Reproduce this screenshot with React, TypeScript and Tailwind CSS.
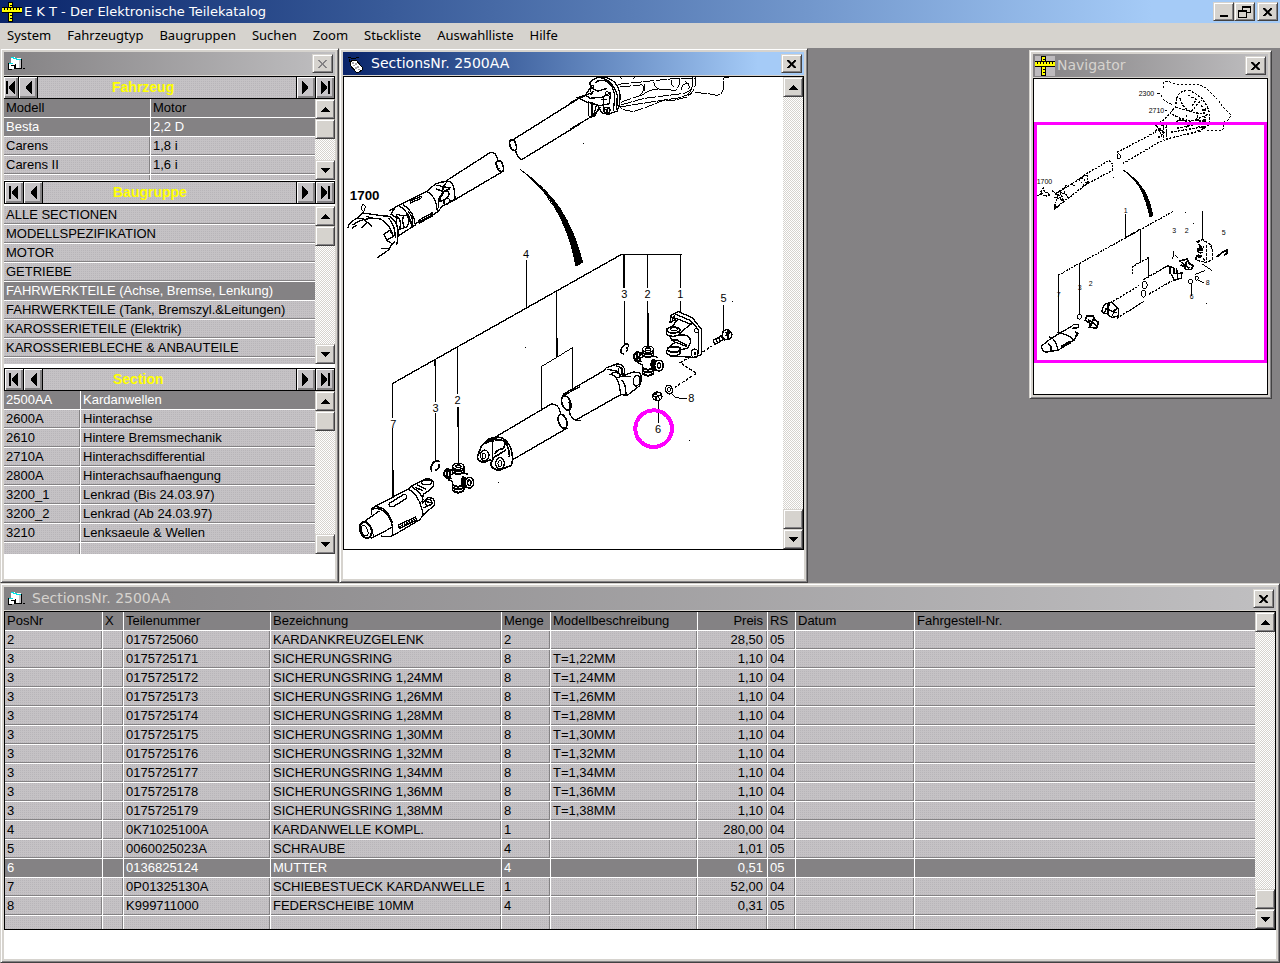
import { useState } from "react";
import clsx from "clsx";

const menu = ["System", "Fahrzeugtyp", "Baugruppen", "Suchen", "Zoom", "Stьckliste", "Auswahlliste", "Hilfe"];

const vehicles = [
    ["Besta", "2,2 D"],
    ["Carens", "1,8 i"],
    ["Carens II", "1,6 i"],
];

const groups = [
    ["ALLE SECTIONEN"],
    ["MODELLSPEZIFIKATION"],
    ["MOTOR"],
    ["GETRIEBE"],
    ["FAHRWERKTEILE (Achse, Bremse, Lenkung)"],
    ["FAHRWERKTEILE (Tank, Bremszyl.&Leitungen)"],
    ["KAROSSERIETEILE (Elektrik)"],
    ["KAROSSERIEBLECHE & ANBAUTEILE"],
];

const sections = [
    ["2500AA", "Kardanwellen"],
    ["2600A", "Hinterachse"],
    ["2610", "Hintere Bremsmechanik"],
    ["2710A", "Hinterachsdifferential"],
    ["2800A", "Hinterachsaufhaengung"],
    ["3200_1", "Lenkrad (Bis 24.03.97)"],
    ["3200_2", "Lenkrad (Ab 24.03.97)"],
    ["3210", "Lenksaeule & Wellen"],
];

const parts = [
    ["2", "", "0175725060", "KARDANKREUZGELENK", "2", "", "28,50", "05", "", ""],
    ["3", "", "0175725171", "SICHERUNGSRING", "8", "T=1,22MM", "1,10", "04", "", ""],
    ["3", "", "0175725172", "SICHERUNGSRING 1,24MM", "8", "T=1,24MM", "1,10", "04", "", ""],
    ["3", "", "0175725173", "SICHERUNGSRING 1,26MM", "8", "T=1,26MM", "1,10", "04", "", ""],
    ["3", "", "0175725174", "SICHERUNGSRING 1,28MM", "8", "T=1,28MM", "1,10", "04", "", ""],
    ["3", "", "0175725175", "SICHERUNGSRING 1,30MM", "8", "T=1,30MM", "1,10", "04", "", ""],
    ["3", "", "0175725176", "SICHERUNGSRING 1,32MM", "8", "T=1,32MM", "1,10", "04", "", ""],
    ["3", "", "0175725177", "SICHERUNGSRING 1,34MM", "8", "T=1,34MM", "1,10", "04", "", ""],
    ["3", "", "0175725178", "SICHERUNGSRING 1,36MM", "8", "T=1,36MM", "1,10", "04", "", ""],
    ["3", "", "0175725179", "SICHERUNGSRING 1,38MM", "8", "T=1,38MM", "1,10", "04", "", ""],
    ["4", "", "0K71025100A", "KARDANWELLE KOMPL.", "1", "", "280,00", "04", "", ""],
    ["5", "", "0060025023A", "SCHRAUBE", "4", "", "1,01", "05", "", ""],
    ["6", "", "0136825124", "MUTTER", "4", "", "0,51", "05", "", ""],
    ["7", "", "0P01325130A", "SCHIEBESTUECK KARDANWELLE", "1", "", "52,00", "04", "", ""],
    ["8", "", "K999711000", "FEDERSCHEIBE 10MM", "4", "", "0,31", "05", "", ""],
];

const raised =
    "bg-[#d6d3ce] border border-t-[#d6d3ce] border-l-[#d6d3ce] border-r-[#424142] border-b-[#424142] shadow-[inset_1px_1px_0_#fff,inset_-1px_-1px_0_#848284]";

// dithered grey of the 256 colour palette
const dither = "bg-[conic-gradient(#b8b5b9_25%,#c5c2c5_0)] bg-[length:2px_2px]";

function RulerIcon({ backed = false }: { backed?: boolean }) {
    return (
        <svg className="shrink-0" width="20" height="20" viewBox="0 0 20 20" shapeRendering="crispEdges">
            {backed && <path d="M0 0h20v20H0z" fill="#bdbabd" />}
            <path d="M6 0h5v20H6z" fill="#000" />
            <path d="M7 1h3v18H7z" fill="#ff0" />
            <path d="M0 5h20v6H0z" fill="#000" />
            <path d="M0 6h20v4H0z" fill="#ff0" />
            <path d="M2.500 6v2M5.500 6v2M8.500 6v2M11.500 6v2M14.500 6v2M17.500 6v2M8 3.500h2M8 13.500h2M8 16.500h2" stroke="#000" />
        </svg>
    );
}

function FormIcon() {
    return (
        <svg className="shrink-0" width="20" height="20" viewBox="0 0 20 20" shapeRendering="crispEdges">
            <path d="M5 3h4v1h6v10H8v-2H5z" fill="#fff" />
            <path d="M5 3h3v1h3v1h4v1h-5V5H7V4H5z" fill="#00e3e7" />
            <path d="M13 6h2v9h-2z" fill="#c6c3c6" />
            <path d="M15 5h1v10H9v-1h6z" fill="#000" />
            <path d="M3 9h6v6H3z" fill="#fff" />
            <path d="M3 9h4v1H3z" fill="#00e3e7" />
            <path d="M2 9h1v6h3v1H2zM5 11h4v4H8v-3H5zM9 10h1v5H9z" fill="#000" />
            <path d="M17 14h2v1h-2z" fill="#000" />
        </svg>
    );
}

function PageIcon() {
    return (
        <svg className="shrink-0" width="20" height="20" viewBox="0 0 20 20" shapeRendering="crispEdges">
            <path d="M3 3.500h3M6 4.500h5M11 3.500h3M4.500 5v3" stroke="#000" />
            <path d="M5 8l3-2h3l6 7v3l-3 2h-3L5 11z" fill="#fff" stroke="#000" />
            <path d="M7 8h2v2H7zM10 9h2v2h-2zM8 11h2v1H8zM12 12h2v2h-2zM10 13h2v2h-2zM13 15h2v1h-2z" fill="#a5a2a5" />
        </svg>
    );
}

function CloseButton({ disabled = false }: { disabled?: boolean }) {
    return (
        <button aria-label="Schließen" disabled={disabled} className={clsx("flex h-[19px] w-[21px] shrink-0 items-center justify-center", raised)}>
            <svg width="9" height="8" viewBox="0 0 9 8" shapeRendering="crispEdges">
                <path
                    d="M0 0h2v1h1v1h1v1h1V2h1V1h1V0h2v1H8v1H7v1H6v2h1v1h1v1h1v1H7V7H6V6H5V5H4v1H3v1H2v1H0V7h1V6h1V5h1V3H2V2H1V1H0z"
                    fill={disabled ? "#848284" : "#000"}
                    stroke={disabled ? "none" : "#000"}
                    strokeWidth=".5"
                />
            </svg>
        </button>
    );
}

function Window({ title, icon, active = false, disabled = false, tight = false, className, children }: {
    title?: string;
    icon: React.ReactNode;
    active?: boolean;
    disabled?: boolean;
    tight?: boolean;
    className?: string;
    children: React.ReactNode;
}) {
    return (
        <section className={clsx("flex flex-col bg-[#d6d3ce] border border-t-[#d6d3ce] border-l-[#d6d3ce] border-r-[#424142] border-b-[#424142] p-[3px] shadow-[inset_1px_1px_0_#fff,inset_-1px_-1px_0_#848284]", className)}>
            <header
                className={clsx(
                    "mb-px flex h-[23px] shrink-0 items-center pl-[2px] pr-[2px] font-['DejaVu_Sans',sans-serif] text-[14px]",
                    tight ? "gap-[2px]" : "gap-[6px]",
                    active ? "bg-linear-to-r from-[#0a246a] to-[#a5cbf7] to-90% text-white" : "bg-linear-to-r from-[#848284] to-[#c0bfc1] text-[#d6d3ce]"
                )}
            >
                {icon}
                <h2 className="flex-1">{title}</h2>
                <CloseButton disabled={disabled} />
            </header>
            {children}
        </section>
    );
}

function Scrollbar({ thumbAtEnd = false }: { thumbAtEnd?: boolean }) {
    return (
        <div className="flex w-5 shrink-0 flex-col bg-[conic-gradient(#fff_25%,#d6d3ce_0_50%,#fff_0_75%,#d6d3ce_0)] bg-[length:2px_2px]">
            <button aria-label="Nach oben" className={clsx("flex h-5 items-center justify-center", raised)}>
                <svg width="9" height="5" viewBox="0 0 9 5" shapeRendering="crispEdges"><path d="M4 0h1v1h1v1h1v1h1v1h1v1H0V4h1V3h1V2h1V1h1z" /></svg>
            </button>
            <div className={clsx("h-5", raised, thumbAtEnd && "mt-auto")} />
            <button aria-label="Nach unten" className={clsx("flex h-5 items-center justify-center", raised, !thumbAtEnd && "mt-auto")}>
                <svg width="9" height="5" viewBox="0 0 9 5" shapeRendering="crispEdges"><path d="M0 0h9v1H8v1H7v1H6v1H5v1H4V4H3V3H2V2H1V1H0z" /></svg>
            </button>
        </div>
    );
}

function StepButton({ label, back = false, end = false, narrow = false }: { label: string; back?: boolean; end?: boolean; narrow?: boolean }) {
    return (
        <button
            aria-label={label}
            className={clsx(
                "flex items-center justify-center overflow-hidden bg-[#c6c3c6] shadow-[inset_1px_1px_0_#fff,inset_-2px_-2px_0_#848284]",
                narrow ? "w-[14px]" : "w-[18px]"
            )}
        >
            <svg width="12" height="13" viewBox="0 0 12 13" className={clsx("shrink-0", !back && "-scale-x-100")} shapeRendering="crispEdges">
                {end && <path d="M1 0h2v13H1z" />}
                <path d="M10 0v13H9v-1H8v-1H7v-1H6V9H5V8H4V5h1V4h1V3h1V2h1V1h1V0z" />
            </svg>
        </button>
    );
}

function RecordBar({ label, clipped = false }: { label: string; clipped?: boolean }) {
    return (
        <div className={clsx("flex h-[23px] shrink-0 gap-px border border-black bg-black", clipped && "border-l-0")}>
            <StepButton label={`${label}: Anfang`} back end narrow={clipped} />
            <StepButton label={`${label}: zurück`} back />
            <h3 className={clsx("flex-1 text-[14px] leading-[21px] font-bold text-[#ff0]", dither, clipped ? "pl-[74px]" : "pl-[70px]")}>{label}</h3>
            <StepButton label={`${label}: weiter`} />
            <StepButton label={`${label}: Ende`} end />
        </div>
    );
}

function Grid({ name, columns, head, rows, initial, filler, right = -1 }: {
    name: string;
    columns: string[];
    head?: string[];
    rows: string[][];
    initial: number;
    filler: string;
    right?: number;
}) {
    const [selected, setSelected] = useState(initial);
    const cell = "overflow-hidden whitespace-nowrap border-b border-white py-0 pr-1 pl-[2px] font-normal";
    const side = (i: number) => clsx(i < columns.length - 1 && "border-r", i === right ? "text-right" : "text-left");

    return (
        <table aria-label={name} className="min-w-0 flex-1 table-fixed border-separate border-spacing-0 text-[13px] leading-[16px]">
            <colgroup>
                {columns.map((c, i) => <col key={i} className={c} />)}
            </colgroup>
            {head && (
                <thead>
                    <tr className="h-[19px] bg-[#848284]">
                        {head.map((h, i) => <th key={h} className={clsx(cell, side(i))}>{h}</th>)}
                    </tr>
                </thead>
            )}
            <tbody>
                {rows.map((row, r) => (
                    <tr key={r} onClick={() => setSelected(r)} className={clsx("h-[19px]", r === selected ? "bg-[#848284] text-white" : dither)}>
                        {row.map((v, i) => (
                            <td key={i} className={clsx(cell, side(i), r !== selected && (i < columns.length - 1 ? "shadow-[inset_-1px_-1px_0_#848284]" : "shadow-[inset_0_-1px_0_#848284]"))}>{v}</td>
                        ))}
                    </tr>
                ))}
                <tr className={clsx(dither, filler)}>
                    {columns.map((_, i) => (
                        <td key={i} className={clsx("border-white p-0", i < columns.length - 1 && "border-r shadow-[inset_-1px_0_0_#848284]")} />
                    ))}
                </tr>
            </tbody>
        </table>
    );
}

// universal joint spider, centred on 0,0
function Spider({ x, y }: { x: number; y: number }) {
    return (
        <g transform={`translate(${x} ${y})`} fill="none" stroke="#000" strokeWidth="4">
            <path d="M-17-36v24l-10 4M17-36v20l12 4M-17 34V10l-14-6M17 34V20l8 2" />
            <ellipse cx="0" cy="-36" rx="17" ry="9" />
            <ellipse cx="0" cy="-36" rx="8" ry="4" />
            <path d="M-17-26q17 10 34 0M-17-18q17 10 34 0" strokeWidth="6" />
            <path d="M-15-22L-32-28q-12 4-10 18q4 10 16 12M-30-24q-8 10 0 24M-22-24q-8 10 0 26" strokeWidth="6" />
            <ellipse cx="33" cy="13" rx="13" ry="16" strokeWidth="5" />
            <ellipse cx="33" cy="13" rx="5" ry="8" />
            <path d="M22-4q-14 14 0 32M16-6q-12 16 0 30" strokeWidth="6" />
            <path d="M-17 20q17 10 34 0M-17 28q17 10 34 0M-17 36q17 14 34 0" strokeWidth="6" />
        </g>
    );
}

function Drawing() {
    return (
        <svg
            className="block shrink-0"
            width="439"
            height="472"
            viewBox="344 77 439 472"
            fill="none"
            stroke="#000"
            strokeWidth="3"
            shapeRendering="crispEdges"
            role="img"
            aria-label="Kardanwellen"
            fontFamily="Liberation Sans, sans-serif"
        >
            {/* front shaft with slip joint */}
            <g transform="translate(340 45) scale(.3333)">
                <path d="M510 290L720 158M545 344L720 237M527 315Q529 335 545 344" strokeWidth="4" />
                <ellipse cx="519" cy="300" rx="9" ry="17" transform="rotate(-20 519 300)" strokeWidth="5" />
                <path d="M318 408L450 323Q470 318 474 350M491 378L345 464M466 350q2 18 12 22" strokeWidth="4" />
                <ellipse cx="480" cy="363" rx="9" ry="17" transform="rotate(-20 480 363)" strokeWidth="5" />
                <path d="M541 373Q610 430 640 480Q690 560 708 664L728 652Q705 560 660 490Q620 430 541 373z" fill="#000" strokeWidth="3" />
                <path d="M148 497L188 475L262 438L285 418Q315 405 335 412Q345 430 345 465L308 482L292 502L228 535" strokeWidth="4" />
                <path d="M262 440Q290 455 292 500M290 420l22 6l20 2M288 432l24 8q10-10 18-8M300 455q20-30 28-8q-10 20-28 22zM312 478q-2-20 14-18q8 10-6 20M345 464l-18 4M320 412q-16 14-10 34l-14 16v28" strokeWidth="4" />
                <path d="M212 468l30-14q6 2 0 6l-30 14zM188 478Q222 498 226 540M178 482Q214 506 216 550M236 526l40-22v10l-38 20zM240 530l36-20" strokeWidth="4" />
                <path d="M165 490q-10 10-12 18l20 12M170 508q18 6 30 2q14 20 0 36l-26 8q-8-20-4-46M172 516q12 4 8 34M192 510q-8 14 0 36M150 514q28 20 24 60l-4 26M146 520q20 20 20 60M226 540l-50 32M205 500q18 20 10 40M210 532l12 14" strokeWidth="4" />
                <path d="M24 548Q28 530 48 522L66 504Q100 508 122 512L150 514M38 540Q70 515 122 522Q150 540 158 568M52 520l18 2l26 22M78 514l20 6M88 522l10-4M36 550l14-10M64 550l16-16M132 568l18-12l10 18l-20 12zM140 586l16 10l-8 16l-24-2M154 600l12-10M150 612l-38 26M66 504l-12 16" strokeWidth="4" />
                <path d="M70 476l6 10q-2 14-6 14q-8-8-4-16z" />
                <text x="74" y="466" textAnchor="middle" fontSize="40" fontWeight="bold" fill="#000" stroke="none">1700</text>
                <text x="558" y="640" textAnchor="middle" fontSize="33" fill="#000" stroke="none">4</text>
                <path d="M845 628L157 1016" strokeWidth="4" />
                <path d="M559 645V790M845 628H1025" />
            </g>

            {/* differential flange */}
            <g transform="translate(570 45) scale(.3333)">
                <path d="M0 173L62 144M0 253L64 215" strokeWidth="4" />
                <path d="M62 140L60 112Q75 94 105 97Q145 106 150 150Q152 175 142 198L115 208L95 204M76 114Q86 102 108 108Q134 122 134 160L130 198M92 98Q128 106 142 150L140 196" strokeWidth="4" />
                <path d="M22 158L46 150L60 160L100 156L122 142L118 176L90 182L46 170zM46 150L62 128L84 138L112 130M56 168v46M66 172v42M80 178l-10 36M84 184l12 20M100 156v40L120 190M92 164h20" strokeWidth="4" />
                <path d="M62 150l8-12M90 186l-18 28l-14 2" strokeWidth="5" />
                <circle cx="111" cy="196" r="9" strokeWidth="4" />
                <circle cx="111" cy="196" r="3" />
                <circle cx="112" cy="146" r="6" />
                <circle cx="68" cy="124" r="4" />
                <path d="M144 118L320 100H376M150 126L212 120M152 180L222 160L345 145L362 134M148 186L250 170L330 158L362 146M152 172L216 150" strokeDasharray="34 4" />
                <path d="M376 97V120Q370 146 350 156L310 166H280L230 186L188 200L160 194L148 184" strokeDasharray="30 4" />
                <path d="M368 97Q370 130 356 146M212 118q12 0 8 20l-8 12M223 118v20M252 112q-2 14 14 20l50 4q14-10 14-36M304 106q0 14 6 20M216 150q30-20 50-18M356 114q-20 0-22 20M346 110q16 10 10 22M150 97l6 4M190 100l6-3" />
                <path d="M374 142L428 148Q454 160 462 128V98H476" strokeDasharray="38 3" />
                <path d="M162 628V728" strokeWidth="5" />
                <path d="M232 628V728M331 628V730M39 295h3" />
            </g>

            {/* rear shaft, front half */}
            <g transform="translate(340 290) scale(.3333)">
                <path d="M650 5V200M604 358V230L698 173V300M352 173V312M286 208V335M287 370V515M158 281V385M158 415V620M355 350V520M285 210v18M353 385v24M158 540v60" />
                <path d="M652 145V200M355 350v60M159 540v78" strokeWidth="5" />
                <g fontSize="33" fill="#000" stroke="none" textAnchor="middle">
                    <text x="353" y="343">2</text>
                    <text x="287" y="367">3</text>
                    <text x="160" y="414">7</text>
                </g>
                <path d="M298 516q-8-8-18 2q-12 16-4 26M284 542q14-2 14-20" strokeWidth="5" />
                <path d="M68 698L118 663M92 745L157 712M96 676Q88 656 108 648L205 597M118 655Q150 670 158 712V735M96 658q20-6 32 4M104 650q36-2 54 50M157 738L238 690M124 738Q146 744 158 736" strokeWidth="4" />
                <ellipse cx="77" cy="720" rx="17" ry="25" transform="rotate(-20 77 720)" strokeWidth="6" />
                <ellipse cx="74" cy="722" rx="9" ry="17" transform="rotate(-20 74 722)" />
                <path d="M68 698q28-6 32 40" />
                <path d="M148 640L190 614Q204 612 198 626L160 650Q144 652 148 640zM176 704L226 682L230 690L178 716z" strokeWidth="4" />
                <path d="M178 712l50-24" strokeWidth="8" strokeDasharray="5 3" />
                <path d="M205 597L215 588L258 566Q284 566 281 586Q272 602 250 612L246 636M205 597Q240 615 250 676M215 590Q245 610 250 630M230 584l28 14M224 592l26 10M246 640L262 624Q286 620 284 644L250 676L238 690M252 634l24 4M250 654l24-12" strokeWidth="4" />
                <ellipse cx="260" cy="577" rx="15" ry="7" strokeWidth="4" />
                <ellipse cx="266" cy="638" rx="10" ry="9" strokeWidth="4" />
                <path d="M465 442L632 343Q656 338 662 372M520 508L682 414" strokeWidth="4" />
                <ellipse cx="668" cy="394" rx="12" ry="22" transform="rotate(-20 668 394)" strokeWidth="5" />
                <ellipse cx="679" cy="339" rx="13" ry="22" transform="rotate(-20 679 339)" strokeWidth="5" />
                <path d="M668 318L720 290M688 360Q690 388 712 391H722" strokeWidth="4" />
                <path d="M412 502L424 468L446 448Q470 436 490 446Q516 462 518 508L514 526L478 541Q452 538 453 520L462 502L498 480M412 502Q416 518 436 516L454 508M458 452V508M448 450L470 446M466 452Q490 446 496 460L490 476Q470 478 464 492M494 450Q510 480 508 500M436 462Q450 448 462 454" strokeWidth="5" />
                <ellipse cx="434" cy="496" rx="13" ry="16" strokeWidth="4" />
                <ellipse cx="432" cy="498" rx="6" ry="9" />
                <ellipse cx="480" cy="520" rx="13" ry="17" strokeWidth="4" />
                <ellipse cx="480" cy="521" rx="6" ry="10" />
                <path d="M556 172h3M474 577h3" />
                <Spider x={355} y={565} />
            </g>

            {/* rear shaft, rear half and flange */}
            <g transform="translate(570 290) scale(.3333)">
                <path d="M164 33V165M233 33V168M332 33V65M461 45V123M265 334V400" />
                <path d="M234 70v98" strokeWidth="5" />
                <g fontSize="33" fill="#000" stroke="none" textAnchor="middle">
                    <text x="163" y="24">3</text>
                    <text x="233" y="24">2</text>
                    <text x="331" y="24">1</text>
                    <text x="461" y="35">5</text>
                    <text x="364" y="336">8</text>
                    <text x="264" y="430">6</text>
                </g>
                <path d="M176 170q0-12-12-6q-16 14-10 26l8 2M168 172q10 4 0 14" strokeWidth="5" />
                <path d="M-22 314L102 242M16 391L152 314M-4 335q6 10 4 24" strokeWidth="4" />
                <path d="M102 242L108 234L140 222Q164 220 164 246L160 258M112 238L142 244L150 256M118 254Q146 250 152 314L172 316L208 288Q220 262 208 248L190 246L140 264M124 250q20-8 30 10h30M154 270q14 8 14 44M138 228q20 0 18 26" strokeWidth="4" />
                <ellipse cx="200" cy="272" rx="10" ry="16" transform="rotate(10 200 272)" strokeWidth="4" />
                <ellipse cx="152" cy="243" rx="7" ry="11" />
                <Spider x={234} y={214} />
                <path d="M300 100L302 76L326 65L368 84L394 118V194L372 202L300 198L290 188M316 72L362 92L386 120V188M300 78l20 14l-16 22M316 84l50 20M304 98l10-22M328 132L366 98" strokeWidth="4" />
                <ellipse cx="310" cy="120" rx="20" ry="9" strokeWidth="5" />
                <ellipse cx="312" cy="118" rx="11" ry="5" />
                <path d="M290 122v12q18 10 38 0v-12M290 180v10q20 14 40 2v-14M300 142l14 16l-18 14M304 150h20M328 136q34-6 34 22l-8 16l-24 6M318 150l34 16M316 156l34 14" strokeWidth="4" />
                <ellipse cx="312" cy="178" rx="20" ry="8" strokeWidth="5" />
                <ellipse cx="374" cy="190" rx="10" ry="13" strokeWidth="4" />
                <circle cx="375" cy="190" r="3" />
                <circle cx="379" cy="121" r="7" />
                <circle cx="311" cy="88" r="5" />
                <path d="M398 186L426 168M362 200L330 218L380 250L314 292" strokeWidth="4" strokeDasharray="9 5" />
                <path d="M428 152L456 136M434 164L464 146M430 152l6 12M438 148l6 12M446 142l6 12M454 138l6 12M460 122l14-4l12 14l-4 14l-18 4l-8-12zM466 126l12 14M466 138l14-10M474 120v28" strokeWidth="4" />
                <ellipse cx="297" cy="299" rx="10" ry="13" transform="rotate(-20 297 299)" strokeWidth="4" />
                <ellipse cx="297" cy="299" rx="4" ry="6" />
                <ellipse cx="262" cy="319" rx="14" ry="13" strokeWidth="4" />
                <path d="M252 312h8v-6M262 318l12-4M258 330v-10l-10-2M270 328l-6-8" strokeWidth="4" />
                <path d="M303 310Q314 325 330 325H352M486 34h3M357 451h3" />
                <circle cx="251" cy="416" r="55" stroke="#f0f" strokeWidth="12" />
            </g>
        </svg>
    );
}

function Overview() {
    return (
        <svg
            className="block"
            width="233"
            height="315"
            viewBox="1034 79 233 315"
            fill="none"
            stroke="#000"
            strokeWidth="3"
            shapeRendering="crispEdges"
            role="img"
            aria-label="Übersicht"
            fontFamily="Liberation Sans, sans-serif"
        >
            <g transform="translate(1020 45) scale(.3333)">
                <g fontSize="21" fill="#000" stroke="none">
                    <text x="356" y="153">2300</text>
                    <text x="386" y="205">2710</text>
                    <text x="50" y="416">1700</text>
                    <text x="311" y="505">1</text>
                    <text x="457" y="564">3</text>
                    <text x="494" y="564">2</text>
                    <text x="605" y="569">5</text>
                    <text x="206" y="724">2</text>
                    <text x="173" y="735">3</text>
                    <text x="110" y="757">7</text>
                    <text x="557" y="719">8</text>
                    <text x="509" y="763">6</text>
                </g>
                <path d="M412 146h10M430 130V112L440 108L470 118H535L560 130L592 162L612 190L632 210L628 224L612 230V250L604 258L562 256M424 150q6 20 32 28M434 198h14" strokeDasharray="8 4" />
                <path d="M470 160Q476 138 505 136Q545 150 562 185Q574 215 566 240Q540 262 480 272L448 280L432 286M470 160L466 186L440 216L414 238M480 160Q488 190 512 200L545 165M505 150l24 14l-14 22M466 186l60 18l30 2M456 208l50 24l60-24M448 240l40-20l30 24M470 250l70-14M500 210v48M530 200l10 60M545 180l16 60M556 190l-8 66M470 226l88 2M452 262l106-18" strokeWidth="4" strokeDasharray="7 4" />
                <path d="M405 262q14-24 24 0q-4 16-14 14M430 244v42M440 240v46M412 236l30 12M416 252l24 14M408 240l14 26" strokeWidth="4" strokeDasharray="10 3" />
                <path d="M292 322L405 262M308 356L424 288M190 392L268 346L280 360M205 415L284 372M278 360v14" strokeWidth="4" strokeDasharray="6 4" />
                <ellipse cx="296" cy="334" rx="5" ry="8" />
                <path d="M50 452l16-6M62 440l8-10l4 10l18 10l-18 4zM104 448L185 398M108 488L204 414M96 436l18 16l-8 22M110 440l20 34M118 434l14 38M128 430l16 28M140 420l-10 14M154 414l10 10M176 404l20 20M186 396l16 22M178 400l24-10l2 24l-16 10M104 456l30 14M120 440l24 12" strokeWidth="4" strokeDasharray="6 3" />
                <path d="M106 476v14l14-10" strokeWidth="5" />
                <path d="M308 374Q350 405 366 440Q380 470 390 516L398 512Q392 470 372 436Q350 400 308 374z" fill="#000" />
                <path d="M458 500L116 690M316 578L362 552M338 686V664L386 638" strokeWidth="4" strokeDasharray="6 3" />
                <path d="M316 508V578M362 552V652M386 638V700M116 690V860M178 656V806M547 498V582M514 718V752" />
                <path d="M462 618v14l-6 10M464 630l8 8M545 656l30 20M526 688l30-12M535 706l16 8" />
                <path d="M370 704L430 670M386 748L455 708M270 774L358 722M290 820L374 768" strokeWidth="4" strokeDasharray="8 3" />
                <ellipse cx="374" cy="720" rx="8" ry="11" />
                <ellipse cx="370" cy="746" rx="7" ry="11" />
                <path d="M430 670l14-8l18 8v16l24-2l-2 16l-22 6l-8-20M450 664v24M470 670l4 34" strokeWidth="4" />
                <path d="M244 800l10-22l20-6l22 20v20l-20 6l-16-12zM264 778v30M256 790l34 14M270 776l-20 30M276 800l16-10M276 812l10-16" strokeWidth="4" />
                <path d="M478 648l24-6l6 14l12 6l-6 12h-16l-4-8l-12-6M484 652l24 18M500 648l-6 24M200 814h20l4 10l12 8l-6 18l-22-4l4-10l-16-10zM204 824l26 18M222 816l-12 32" strokeWidth="5" />
                <ellipse cx="178" cy="815" rx="6" ry="8" />
                <path d="M64 904l14-12l16-12l64-38M74 922l40-6l50-32l8-24M88 876q20 4 26 40M64 904q4 20 16 16M158 838h18v10l-20 2M166 860l8 6l-8 12M112 862q40 8 50 24M84 896q14 8 8 24" strokeWidth="4" />
                <path d="M124 906l26-14" strokeWidth="9" />
                <path d="M532 590l16-6l24 16l6 16v28l-20 8l-30-6v-12l14-8v-20zM538 606h14M530 620l20 4M534 636h10M560 600v46M550 640l10 12" strokeWidth="4" strokeDasharray="9 3" />
                <path d="M530 614h18M530 634h16" strokeWidth="7" />
                <path d="M590 636l18-14l14-8v12l-10 4" strokeWidth="5" />
                <ellipse cx="512" cy="710" rx="6" ry="7" />
                <ellipse cx="530" cy="700" rx="5" ry="6" />
                <path d="M495 502h4M519 535h3M559 775h3M280 397h3" />
            </g>
            <path d="M1035.500 123.500H1265.500V361.500H1035.500z" stroke="#f0f" />
        </svg>
    );
}

export default function App() {
    return (
        <div className="flex min-h-screen flex-col bg-[#848284] font-['Liberation_Sans',Arial,sans-serif] text-black">
            <header className="flex h-[23px] shrink-0 items-center bg-linear-to-r from-[#0a246a] to-[#a5cbf7] to-90% pl-[2px] pr-[2px]">
                <RulerIcon />
                <h1 className="flex-1 pl-[2px] font-['DejaVu_Sans',sans-serif] text-[13px] text-white">E K T - Der Elektronische Teilekatalog</h1>
                <button aria-label="Minimieren" className={clsx("flex h-[19px] w-[21px] items-end justify-center pb-[3px]", raised)}>
                    <span className="h-[2px] w-2 bg-black" />
                </button>
                <button aria-label="Wiederherstellen" className={clsx("mr-[2px] flex h-[19px] w-[21px] items-center justify-center", raised)}>
                    <svg width="13" height="12" viewBox="0 0 13 12" fill="none" stroke="#000" shapeRendering="crispEdges">
                        <path d="M4.500 4V.5h8v6H9M.5 4.500h8v7h-8zM4 1.500h8M.5 5.500h8" />
                    </svg>
                </button>
                <CloseButton />
            </header>

            <nav className="flex h-[25px] shrink-0 items-center gap-4 bg-[#d6d3ce] px-[7px] font-['Noto_Sans',sans-serif] text-[13px]">
                {menu.map((m) => <button key={m}>{m}</button>)}
            </nav>

            <main className="flex flex-1 flex-col">
                <div className="flex items-start">
                    <Window icon={<FormIcon />} disabled className="w-[339px] shrink-0 self-stretch">
                        <div className="flex-1 bg-white">
                            <RecordBar label="Fahrzeug" clipped />
                            <div className="mb-px flex">
                                <Grid name="Fahrzeug" columns={["w-[147px]", ""]} head={["Modell", "Motor"]} rows={vehicles} initial={0} filler="h-[5px]" />
                                <Scrollbar />
                            </div>
                            <RecordBar label="Baugruppe" />
                            <div className="mt-[2px] mb-1 flex">
                                <Grid name="Baugruppe" columns={[""]} rows={groups} initial={4} filler="h-[6px]" />
                                <Scrollbar />
                            </div>
                            <RecordBar label="Section" />
                            <div className="flex">
                                <Grid name="Section" columns={["w-[77px]", ""]} rows={sections} initial={0} filler="h-[11px]" />
                                <Scrollbar />
                            </div>
                        </div>
                    </Window>

                    <Window title="SectionsNr. 2500AA" icon={<PageIcon />} active className="w-[469px] shrink-0">
                        <div className="bg-white pb-[29px]">
                            <div className="flex border border-black">
                                <Drawing />
                                <Scrollbar thumbAtEnd />
                            </div>
                        </div>
                    </Window>

                    <Window title="Navigator" icon={<RulerIcon backed />} tight className="mt-[2px] mr-2 ml-auto w-[243px] shrink-0">
                        <div className="border border-black bg-white">
                            <Overview />
                        </div>
                    </Window>
                </div>

                <Window title="SectionsNr. 2500AA" icon={<FormIcon />} className="flex-1">
                    <div className="flex-1 bg-white">
                        <div className="flex border border-black">
                            <Grid
                                name="Teile"
                                columns={["w-[98px]", "w-[21px]", "w-[147px]", "w-[231px]", "w-[49px]", "w-[147px]", "w-[70px]", "w-[28px]", "w-[119px]", ""]}
                                head={["PosNr", "X", "Teilenummer", "Bezeichnung", "Menge", "Modellbeschreibung", "Preis", "RS", "Datum", "Fahrgestell-Nr."]}
                                rows={parts}
                                initial={12}
                                filler="h-[13px]"
                                right={6}
                            />
                            <Scrollbar thumbAtEnd />
                        </div>
                    </div>
                </Window>
            </main>
        </div>
    );
}
